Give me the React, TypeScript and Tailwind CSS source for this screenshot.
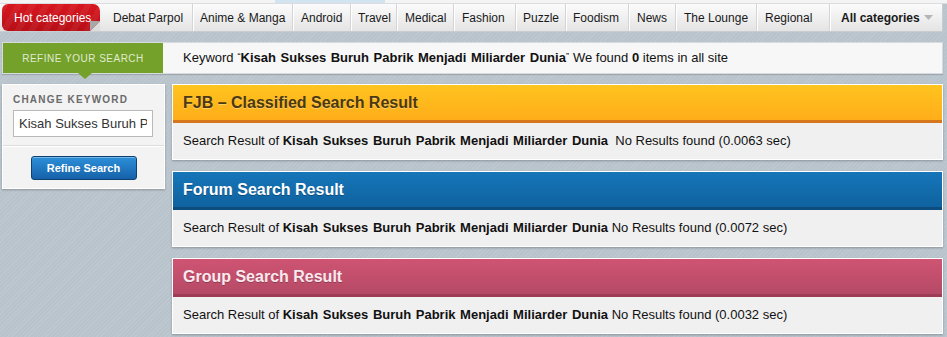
const navItems = [
  { label: "Debat Parpol", w: "w-[93px] pl-[13px]" },
  { label: "Anime & Manga", w: "w-[100px] pl-[7px]" },
  { label: "Android", w: "w-[58px] pl-[8px]" },
  { label: "Travel", w: "w-[46px] pl-[7px]" },
  { label: "Medical", w: "w-[57px] pl-[8px]" },
  { label: "Fashion", w: "w-[62px] pl-[8px]" },
  { label: "Puzzle", w: "w-[50px] pl-[7px]" },
  { label: "Foodism", w: "w-[63px] pl-[7px]" },
  { label: "News", w: "w-[47px] pl-[8px]" },
  { label: "The Lounge", w: "w-[81px] pl-[8px]" },
  { label: "Regional", w: "w-[73px] pl-[8px]" },
];

const keyword = "Kisah Sukses Buruh Pabrik Menjadi Miliarder Dunia";

type Result = {
  title: string;
  head: string;
  titleColor: string;
  time: string;
  gap?: boolean;
};

const results: Result[] = [
  {
    title: "FJB – Classified Search Result",
    head: "bg-[linear-gradient(#ffc41f,#ffad19)] border-[#d7771d]",
    titleColor: "text-[#4a3913] [text-shadow:0_1px_0_rgba(255,255,255,0.35)]",
    time: "0.0063",
    gap: true,
  },
  {
    title: "Forum Search Result",
    head: "bg-[linear-gradient(#1676b9,#0f629f)] border-[#0c4d7e]",
    titleColor: "text-white [text-shadow:0_1px_0_rgba(0,0,0,0.3)]",
    time: "0.0072",
  },
  {
    title: "Group Search Result",
    head: "bg-[linear-gradient(#cf5473,#b54a66)] border-[#9c3c55]",
    titleColor: "text-[#fbe9ee] [text-shadow:0_1px_0_rgba(0,0,0,0.25)]",
    time: "0.0032",
  },
];

function ResultPanel({ r }: { r: Result }) {
  return (
    <div className="flex flex-col border border-white shadow-[0_1px_2px_rgba(0,0,0,0.25)]">
      <div className={`flex h-[38px] items-center border-b-[3px] px-[10px] ${r.head}`}>
        <h2 className={`text-[16px] font-bold ${r.titleColor}`}>{r.title}</h2>
      </div>
      <div className="flex h-[36px] items-center bg-[#f0f0f0] px-[10px] text-[13px] text-[#111]">
        <span>
          Search Result of <b className="[word-spacing:1px]">{keyword}</b>
          {r.gap ? "\u00a0\u00a0" : " "}No Results found ({r.time} sec)
        </span>
      </div>
    </div>
  );
}

export default function App() {
  return (
    <div className="h-[337px] w-[947px] overflow-hidden bg-[#b8c3cb] bg-[repeating-linear-gradient(135deg,rgba(255,255,255,0.09)_0_1px,transparent_1px_3px)] font-['Liberation_Sans',Arial,sans-serif]">
      <div className="flex h-[4px] border-b border-[#d9dde0] bg-[#f4f4f4]">
        <div className="ml-[275px] w-[110px] bg-[#d3e4f1]" />
      </div>
      <nav className="flex h-[28px] w-[943px] items-stretch border-r border-b border-[#c9cdd0] bg-[linear-gradient(#fbfbfb,#e4e4e4)] text-[12px] text-[#1a1a1a]">
        <div className="relative ml-[2px] flex w-[98px] items-center rounded-tl-[6px] rounded-tr-[7px] rounded-bl-[6px] bg-[repeating-linear-gradient(120deg,rgba(255,255,255,0.05)_0_6px,transparent_6px_12px),linear-gradient(#d8161f,#b70f17)] pl-[12px] text-white">
          Hot categories
          <div className="absolute right-0 bottom-0 h-[10px] w-[10px] bg-[#dcdcdc] [clip-path:polygon(100%_0,100%_100%,0_100%)]" />
          <div className="absolute right-0 bottom-0 h-[10px] w-[10px] bg-[#a8a8a8] [clip-path:polygon(100%_0,0_100%,0_0)]" />
        </div>
        {navItems.map((n) => (
          <span
            key={n.label}
            className={`flex h-full items-center border-r border-[#d4d4d4] shadow-[1px_0_0_#fff] ${n.w}`}
          >
            {n.label}
          </span>
        ))}
        <span className="flex h-full items-center gap-[4px] pl-[11px]">
          <b>All categories</b>
          <svg width="9" height="5" viewBox="0 0 9 5">
            <path d="M0 0h9L4.5 5z" fill="#b5b5b5" />
          </svg>
        </span>
      </nav>

      <div className="mt-[10px] ml-[2px] flex h-[32px] w-[941px] border border-[#d7dbde] bg-[#f7f7f7] shadow-[0_1px_1px_rgba(0,0,0,0.15)]">
        <div className="relative flex w-[160px] items-center justify-center bg-[#73a12a] text-[10px] tracking-[0.5px] text-[#e1ebd2]">
          REFINE YOUR SEARCH
          <div className="absolute top-full left-[75px] h-[6px] w-[14px] bg-[#73a12a] [clip-path:polygon(0_0,100%_0,50%_100%)]" />
        </div>
        <p className="flex items-center pl-[20px] text-[13px] text-[#111]">
          Keyword
          <span className="mt-[7px] ml-[4px] self-start text-[9px]">“</span>
          <b className="[word-spacing:1px]">{keyword}</b>
          <span className="mt-[7px] self-start text-[9px]">”</span>
          <span className="ml-[4px]">
            We found <b>0</b> items in all site
          </span>
        </p>
      </div>

      <div className="mt-[10px] ml-[2px] flex items-start gap-[7px]">
        <aside className="flex w-[163px] flex-col border border-white bg-[#f3f3f3] shadow-[0_1px_2px_rgba(0,0,0,0.25)]">
          <div className="px-[10px] pt-[9px] pb-[8px]">
            <div className="text-[10px] leading-[12px] font-bold tracking-[1.2px] text-[#6a6a6a]">
              CHANGE KEYWORD
            </div>
            <input
              readOnly
              value="Kisah Sukses Buruh Pabrik Menjadi Miliarder Dunia"
              className="mt-[4px] h-[27px] w-[140px] border border-[#b9b9b9] bg-white px-[5px] text-[13px] text-[#333] outline-none"
            />
          </div>
          <div className="flex justify-center border-t border-[#dcdcdc] pt-[10px] pb-[8px] shadow-[inset_0_1px_0_#fff]">
            <button className="h-[24px] w-[106px] rounded-[3px] border border-[#0e416f] bg-[linear-gradient(#2d90da,#1561a9)] text-[11px] font-bold text-white shadow-[inset_0_1px_0_rgba(255,255,255,0.35)]">
              Refine Search
            </button>
          </div>
        </aside>

        <main className="flex w-[771px] flex-col gap-[11px]">
          {results.map((r) => (
            <ResultPanel key={r.title} r={r} />
          ))}
        </main>
      </div>
    </div>
  );
}
